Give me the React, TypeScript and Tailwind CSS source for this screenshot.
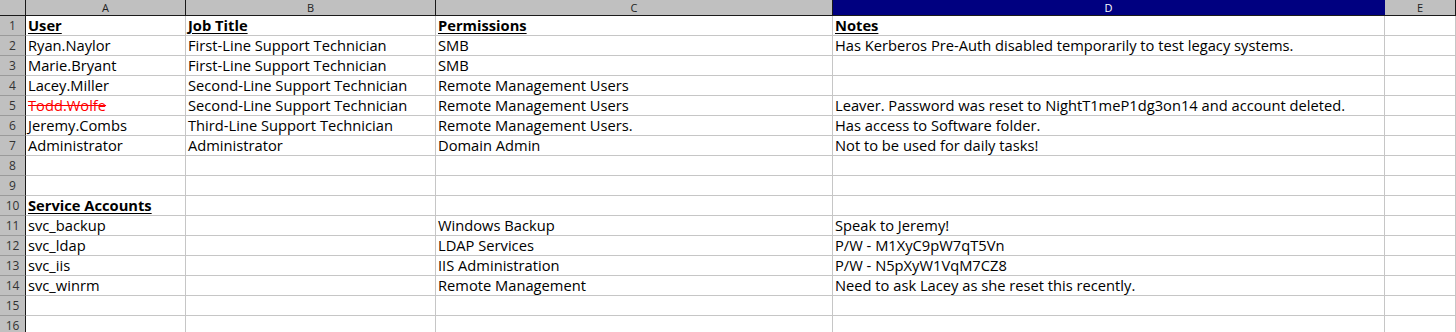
import React from "react";

const cols = [
  { key: "A", w: "w-[160px]" },
  { key: "B", w: "w-[250px]" },
  { key: "C", w: "w-[397px]" },
  { key: "D", w: "w-[552px]" },
  { key: "E", w: "w-[71px]" },
];

type Cell = { t: string; bold?: boolean; strike?: boolean };

const rows: (Cell | null)[][] = [
  [{ t: "User", bold: true }, { t: "Job Title", bold: true }, { t: "Permissions", bold: true }, { t: "Notes", bold: true }, null],
  [{ t: "Ryan.Naylor" }, { t: "First-Line Support Technician" }, { t: "SMB" }, { t: "Has Kerberos Pre-Auth disabled temporarily to test legacy systems." }, null],
  [{ t: "Marie.Bryant" }, { t: "First-Line Support Technician" }, { t: "SMB" }, null, null],
  [{ t: "Lacey.Miller" }, { t: "Second-Line Support Technician" }, { t: "Remote Management Users" }, null, null],
  [{ t: "Todd.Wolfe", strike: true }, { t: "Second-Line Support Technician" }, { t: "Remote Management Users" }, { t: "Leaver. Password was reset to NightT1meP1dg3on14 and account deleted." }, null],
  [{ t: "Jeremy.Combs" }, { t: "Third-Line Support Technician" }, { t: "Remote Management Users." }, { t: "Has access to Software folder." }, null],
  [{ t: "Administrator" }, { t: "Administrator" }, { t: "Domain Admin" }, { t: "Not to be used for daily tasks!" }, null],
  [null, null, null, null, null],
  [null, null, null, null, null],
  [{ t: "Service Accounts", bold: true }, null, null, null, null],
  [{ t: "svc_backup" }, null, { t: "Windows Backup" }, { t: "Speak to Jeremy!" }, null],
  [{ t: "svc_ldap" }, null, { t: "LDAP Services" }, { t: "P/W - M1XyC9pW7qT5Vn" }, null],
  [{ t: "svc_iis" }, null, { t: "IIS Administration" }, { t: "P/W - N5pXyW1VqM7CZ8" }, null],
  [{ t: "svc_winrm" }, null, { t: "Remote Management" }, { t: "Need to ask Lacey as she reset this recently." }, null],
  [null, null, null, null, null],
  [null, null, null, null, null],
];

export default function App() {
  return (
    <div
      className="w-[1456px] h-[332px] overflow-hidden bg-white"
      style={{ fontFamily: '"Open Sans", "Noto Sans", sans-serif' }}
    >
      {/* column header */}
      <div className="flex h-[16px] bg-[#c0c0c0] border-b border-[#1a1a1a]">
        <div className="w-[26px] shrink-0 border-r border-[#1a1a1a]" />
        {cols.map((c) => (
          <div
            key={c.key}
            className={`${c.w} shrink-0 flex items-center justify-center text-[11px] leading-none border-r ${
              c.key === "D"
                ? "bg-[#000080] text-white border-[#000080]"
                : "text-[#222] border-[#1a1a1a]"
            }`}
          >
            {c.key}
          </div>
        ))}
      </div>
      {rows.map((r, i) => (
        <div key={i} className="flex h-[20px]">
          <div className="w-[26px] shrink-0 bg-[#c0c0c0] border-r border-[#1a1a1a] border-b border-b-[#9a9a9a] flex items-center justify-center text-[12px] leading-none text-[#333]">
            {i + 1}
          </div>
          {cols.map((c, j) => {
            const cell = r[j];
            return (
              <div
                key={c.key}
                className={`${c.w} shrink-0 border-r border-b border-[#c6c6c6] flex items-end pl-[2px] pb-[0px] overflow-visible whitespace-nowrap text-[14.7px] leading-[19px]`}
              >
                {cell && (
                  <span
                    className={`${cell.bold ? "font-bold underline underline-offset-[2px]" : ""} ${
                      cell.strike ? "line-through text-[#ff0000]" : "text-black"
                    }`}
                  >
                    {cell.t}
                  </span>
                )}
              </div>
            );
          })}
        </div>
      ))}
    </div>
  );
}
